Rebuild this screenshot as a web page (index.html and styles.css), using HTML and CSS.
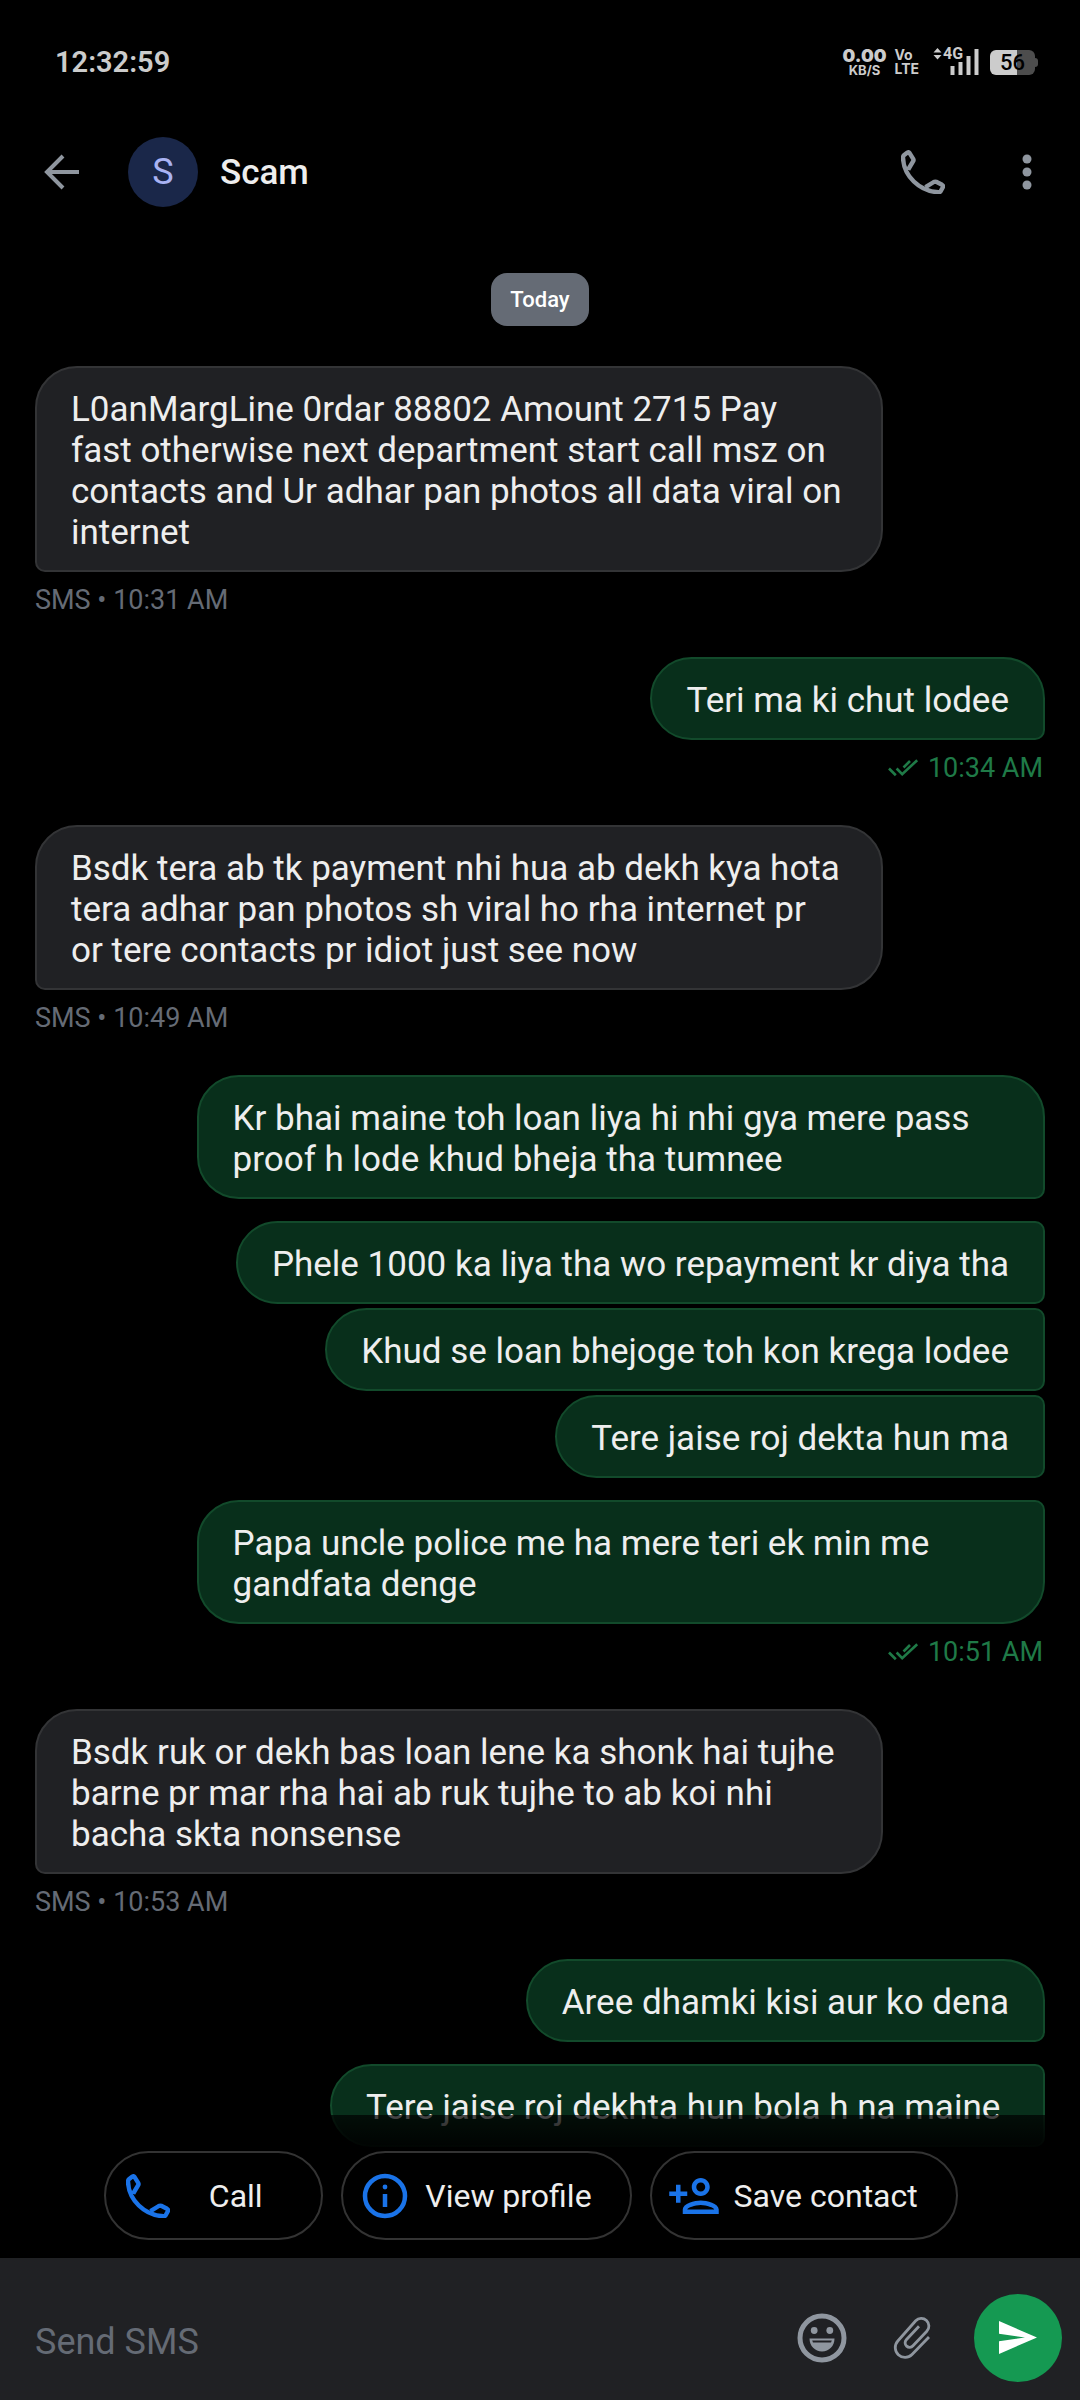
FILE: index.html
```html
<!DOCTYPE html>
<html lang="en">
<head>
<meta charset="utf-8">
<meta name="viewport" content="width=device-width, initial-scale=1">
<title>Messages</title>
<link rel="stylesheet" href="styles.css">
</head>
<body>
<svg class="sprite" aria-hidden="true">
  <symbol id="phone" viewBox="0 0 44 44">
    <path d="M2 7.5Q2 6 3.2 5L6.4 2.6Q7.7 1.8 8.6 3.1L12.2 8.8Q12.9 10 12.2 11.2L7.2 19.5M24.5 37.2L32.8 32Q34 31.3 35.2 31.8L41 34.8Q42.5 35.8 42 37L39.8 41Q39.2 42.2 37.5 42.2C18.5 41.5 2.5 26 2 7.5" fill="none" stroke="currentColor" stroke-width="4.4" stroke-linejoin="round"/>
  </symbol>
  <symbol id="ticks" viewBox="0 0 32 20">
    <path d="M2 10.5L8.8 17.2M9.6 10.5L15.2 16.2L30.2 2.2M16.5 9.5L23 3" fill="none" stroke="currentColor" stroke-width="2.6"/>
  </symbol>
</svg>
<div class="app">
  <div class="status">
    <span class="clock">12:32:59</span>
    <div class="status-icons">
      <div class="rate"><b>0.00</b><small>KB/S</small></div>
      <div class="volte"><span>Vo</span><span>LTE</span></div>
      <div class="signal">
        <svg width="46" height="28" viewBox="0 0 46 28" fill="currentColor" aria-hidden="true">
          <path d="M4.5 0L8.5 4.5H.5ZM.5 7H8.5L4.5 11.5ZM17.5 18h4v9h-4zM25.500 14h4v13h-4zM33.500 8h4v19h-4zM41.500 1h4v26h-4z"/>
        </svg>
        <span class="net">4G</span>
      </div>
      <div class="battery">56</div>
    </div>
  </div>

  <header class="bar">
    <button class="icon-btn" aria-label="Back">
      <svg width="36" height="36" viewBox="0 0 36 36" fill="none" stroke="currentColor" stroke-width="4" aria-hidden="true"><path d="M35 18H3M19 2L3 18L19 34"/></svg>
    </button>
    <span class="avatar" aria-hidden="true">S</span>
    <h1 class="name">Scam</h1>
    <button class="icon-btn call" aria-label="Call"><svg width="44" height="44" aria-hidden="true"><use href="#phone"/></svg></button>
    <button class="icon-btn" aria-label="More options">
      <svg width="20" height="36" viewBox="0 0 20 36" fill="currentColor" aria-hidden="true"><circle cx="10" cy="5" r="4.500"/><circle cx="10" cy="18" r="4.500"/><circle cx="10" cy="31" r="4.500"/></svg>
    </button>
  </header>

  <main class="thread">
    <div class="day">Today</div>

    <p class="bubble in wide">L0anMargLine 0rdar 88802 Amount 2715 Pay<br>fast otherwise next department start call msz on<br>contacts and Ur adhar pan photos all data viral on<br>internet</p>
    <div class="meta">SMS • 10:31 AM</div>

    <p class="bubble out">Teri ma ki chut lodee</p>
    <div class="meta sent"><svg width="32" height="20" aria-hidden="true"><use href="#ticks"/></svg>10:34 AM</div>

    <p class="bubble in wide">Bsdk tera ab tk payment nhi hua ab dekh kya hota<br>tera adhar pan photos sh viral ho rha internet pr<br>or tere contacts pr idiot just see now</p>
    <div class="meta">SMS • 10:49 AM</div>

    <p class="bubble out wide">Kr bhai maine toh loan liya hi nhi gya mere pass<br>proof h lode khud bheja tha tumnee</p>
    <p class="bubble out mid spaced">Phele 1000 ka liya tha wo repayment kr diya tha</p>
    <p class="bubble out mid">Khud se loan bhejoge toh kon krega lodee</p>
    <p class="bubble out mid">Tere jaise roj dekta hun ma</p>
    <p class="bubble out wide last spaced">Papa uncle police me ha mere teri ek min me<br>gandfata denge</p>
    <div class="meta sent"><svg width="32" height="20" aria-hidden="true"><use href="#ticks"/></svg>10:51 AM</div>

    <p class="bubble in wide">Bsdk ruk or dekh bas loan lene ka shonk hai tujhe<br>barne pr mar rha hai ab ruk tujhe to ab koi nhi<br>bacha skta nonsense</p>
    <div class="meta">SMS • 10:53 AM</div>

    <p class="bubble out">Aree dhamki kisi aur ko dena</p>
    <p class="bubble out mid spaced">Tere jaise roj dekhta hun bola h na maine&nbsp;</p>
  </main>

  <div class="chips">
    <button class="chip"><svg class="glyph" viewBox="-5 -5 54 54" aria-hidden="true"><use href="#phone" width="44" height="44"/></svg><span>Call</span></button>
    <button class="chip"><svg class="glyph" viewBox="0 0 54 54" fill="none" stroke="currentColor" stroke-width="4.500" aria-hidden="true"><circle cx="27" cy="27" r="20"/><path d="M27 25v13" stroke-width="4.500"/><circle cx="27" cy="18" r="2.400" fill="currentColor" stroke="none"/></svg><span>View profile</span></button>
    <button class="chip"><svg class="glyph" viewBox="0 0 24 24" fill="currentColor" aria-hidden="true"><path d="M15 12c2.210 0 4-1.790 4-4s-1.790-4-4-4-4 1.790-4 4 1.790 4 4 4zm0-6c1.100 0 2 .9 2 2s-.9 2-2 2-2-.9-2-2 .9-2 2-2zm0 8c-2.670 0-8 1.340-8 4v2h16v-2c0-2.660-5.330-4-8-4zm-6 4c.22-.72 3.310-2 6-2 2.700 0 5.800 1.290 6 2H9zm-3-3v-3h3v-2H6V7H4v3H1v2h3v3z"/></svg><span>Save contact</span></button>
  </div>

  <form class="composer">
    <input class="field" type="text" placeholder="Send SMS" aria-label="Send SMS">
    <button class="tool" type="button" aria-label="Emoji">
      <svg width="50" height="50" viewBox="0 0 50 50" fill="currentColor" aria-hidden="true">
        <circle cx="25" cy="25" r="22" fill="none" stroke="currentColor" stroke-width="5"/>
        <circle cx="17.200" cy="17.500" r="3.400"/><circle cx="32.800" cy="17.500" r="3.400"/>
        <path fill-rule="evenodd" d="M12.500 25.500h25c0 7.500-5.500 13-12.500 13s-12.500-5.500-12.500-13zM15.200 27.600l.8 2h18l.8-2z"/>
      </svg>
    </button>
    <button class="tool" type="button" aria-label="Attach">
      <svg width="38" height="44" viewBox="0 0 38 44" fill="none" stroke="currentColor" stroke-width="2.800" aria-hidden="true"><path d="M36 21L19 38.500A9.800 9.800 0 0 1 4.800 25L22.700 4.800A7.600 7.600 0 0 1 33.800 15.300L20 29.800A4.400 4.400 0 0 1 13.300 23.700L26 10.300"/></svg>
    </button>
    <button class="send" type="submit" aria-label="Send">
      <svg width="40" height="34" viewBox="0 0 40 34" fill="currentColor" aria-hidden="true"><path d="M1 0L39 16.500L1 33V20.200L27 16.500L1 12.800Z"/></svg>
    </button>
  </form>
</div>
</body>
</html>
```
FILE: styles.css
```css
* {
  box-sizing: border-box;
}

body {
  margin: 0;
  background: #000;
  color: #eee;
  font-family: Roboto, "Liberation Sans", sans-serif;
}

button,
input {
  border: 0;
  padding: 0;
  background: none;
  color: inherit;
  font: inherit;
}

svg {
  display: block;
  flex: none;
}

.sprite {
  position: absolute;
  width: 0;
  height: 0;
}

.app {
  display: flex;
  flex-direction: column;
  height: 100vh;
  overflow: hidden;
}

/* Status bar */
.status {
  display: flex;
  flex: none;
  align-items: center;
  justify-content: space-between;
  height: 124px;
  padding: 0 45px 0 55px;
  color: #ccc;
}

.clock {
  font-size: 29px;
  font-weight: 600;
}

.status-icons {
  display: flex;
  align-items: center;
  height: 28px;
}

.rate,
.volte {
  display: flex;
  flex-direction: column;
  align-items: center;
  font-family: Inter, sans-serif;
  font-weight: 700;
}

.rate {
  margin-right: 8px;
}

.rate b {
  font-size: 18px;
  line-height: 16px;
}

.rate small {
  font-size: 13px;
  line-height: 12px;
}

.volte {
  align-items: flex-start;
  margin-right: 14px;
  font-size: 14px;
  line-height: 14px;
}

.signal {
  position: relative;
  margin-right: 11px;
}

.net {
  position: absolute;
  top: 0;
  left: 10px;
  font-size: 16px;
  font-weight: 700;
  line-height: 12px;
}

.battery {
  position: relative;
  width: 45px;
  height: 25px;
  border-radius: 6px;
  background: linear-gradient(90deg, #ccc 60%, #4d4d4d 60%);
  color: #000;
  font-size: 22px;
  font-weight: 500;
  line-height: 26px;
  text-align: center;
}

.battery::after {
  content: "";
  position: absolute;
  top: 8px;
  left: 45px;
  width: 3px;
  height: 9px;
  border-radius: 0 3px 3px 0;
  background: #4d4d4d;
}

/* Conversation header */
.bar {
  display: flex;
  flex: none;
  align-items: center;
  height: 95px;
  padding: 0 43px 0 44px;
}

.icon-btn {
  color: #8f969f;
}

.avatar {
  width: 70px;
  height: 70px;
  margin: 0 22px 0 48px;
  border-radius: 50%;
  background: #1a2749;
  color: #a9b3f3;
  font-size: 36px;
  line-height: 70px;
  text-align: center;
}

.name {
  flex: 1;
  margin: 0;
  padding-top: 2px;
  font-size: 35px;
  font-weight: 500;
}

.call {
  margin-right: 72px;
}

/* Messages */
.thread {
  display: flex;
  flex: 1;
  flex-direction: column;
  align-items: flex-start;
  min-height: 0;
  padding: 54px 35px 0;
  overflow: hidden;
}

.thread > * {
  flex: none;
}

.day {
  align-self: center;
  margin-bottom: 40px;
  padding: 0 19px;
  border-radius: 16px;
  background: #656b75;
  color: #fff;
  font-size: 22px;
  font-weight: 500;
  line-height: 53px;
}

.bubble {
  max-width: 84%;
  margin: 0;
  padding: 21px 34px 17px;
  border: 2px solid #333436;
  border-radius: 42px;
  font-size: 35px;
  line-height: 41px;
}

.wide {
  width: 84%;
}

.in {
  border-bottom-left-radius: 10px;
  background: #202124;
}

.out {
  align-self: flex-end;
  border-color: #124a2b;
  border-bottom-right-radius: 10px;
  background: #082f1b;
}

.mid {
  margin-top: 4px;
  border-top-right-radius: 10px;
}

.last {
  border-top-right-radius: 10px;
  border-bottom-right-radius: 42px;
}

.spaced {
  margin-top: 22px;
}

.meta {
  display: flex;
  align-items: center;
  margin: 10px 0 39px;
  color: #656b75;
  font-size: 27px;
  line-height: 36px;
}

.sent {
  align-self: flex-end;
  gap: 9px;
  margin-right: 2px;
  color: #1f7a47;
}

/* Quick actions */
.chips {
  position: relative;
  display: flex;
  flex: none;
  justify-content: center;
  padding-bottom: 18px;
  background: #000;
}

.chips::before {
  content: "";
  position: absolute;
  right: 0;
  bottom: 100%;
  left: 0;
  height: 36px;
  background: linear-gradient(rgba(0, 0, 0, 0.7), rgba(0, 0, 0, 0.96));
}

.chip {
  display: flex;
  align-items: center;
  gap: 13px;
  min-width: 219px;
  height: 89px;
  margin-right: 18px;
  padding: 0 38px 0 15px;
  border: 2px solid #333;
  border-radius: 45px;
  font-size: 32px;
}

.chip span {
  flex: 1;
  text-align: center;
}

.glyph {
  width: 54px;
  height: 54px;
  color: #1a73e8;
}

/* Composer */
.composer {
  display: flex;
  flex: none;
  align-items: center;
  height: 142px;
  padding: 36px 18px 18px 35px;
  background: #202124;
}

.field {
  flex: 1;
  min-width: 0;
  height: 88px;
  padding-top: 8px;
  outline: 0;
  font-size: 36px;
}

.field::placeholder {
  color: #656b75;
  opacity: 1;
}

.tool {
  display: flex;
  align-items: center;
  justify-content: center;
  width: 90px;
  height: 88px;
  color: #8f969f;
}

.send {
  display: flex;
  align-items: center;
  justify-content: center;
  width: 88px;
  height: 88px;
  margin-left: 17px;
  border-radius: 50%;
  background: #159952;
  color: #fff;
}
```
